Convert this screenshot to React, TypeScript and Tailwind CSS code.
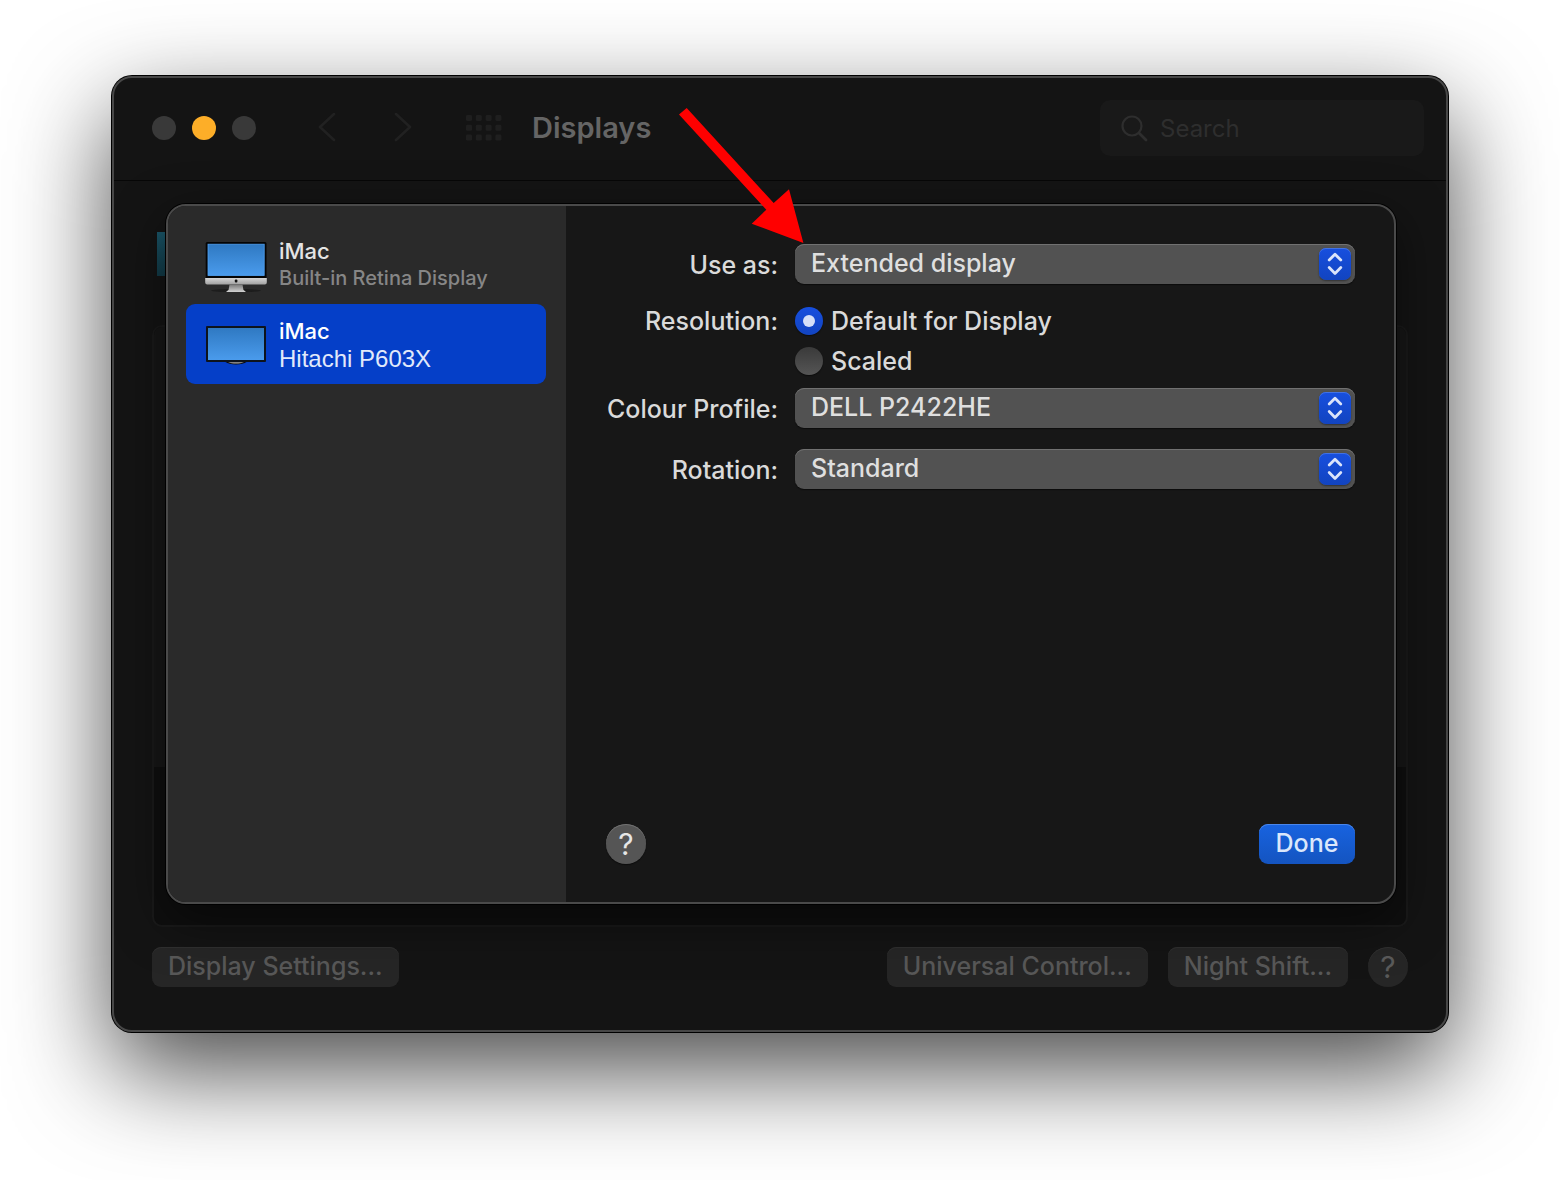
import { useState } from "react";
import type { ReactNode } from "react";

function IMacIcon() {
    return (
        <svg width="62" height="56" viewBox="0 0 62 56" aria-hidden="true">
            <defs>
                <linearGradient id="imac-screen" x1="0" y1="0" x2="0" y2="1">
                    <stop offset="0" stopColor="#2f79c2" />
                    <stop offset="1" stopColor="#4a9bec" />
                </linearGradient>
                <linearGradient id="imac-chin" x1="0" y1="0" x2="0" y2="1">
                    <stop offset="0" stopColor="#d6d6d6" />
                    <stop offset="1" stopColor="#a2a2a2" />
                </linearGradient>
                <linearGradient id="imac-stand" x1="0" y1="0" x2="0" y2="1">
                    <stop offset="0" stopColor="#777777" />
                    <stop offset="1" stopColor="#d2d2d2" />
                </linearGradient>
            </defs>
            <ellipse cx="31" cy="54.6" rx="25" ry="1.6" fill="#1d1d1d" />
            <rect x="0.7" y="6" width="60.8" height="37" rx="1.5" fill="#050505" />
            <rect x="3" y="8.2" width="56.2" height="31.4" fill="url(#imac-screen)" stroke="#4fa0f2" strokeWidth="0.8" />
            <path d="M0.2 42h61.6v4.4a2 2 0 0 1-2 2H2.2a2 2 0 0 1-2-2z" fill="url(#imac-chin)" />
            <rect x="29.800" y="43.6" width="2.6" height="2.8" rx="1" fill="#111111" />
            <path d="M24.5 48.4h13l0.900 5.400 2.600 2.200H21l2.600-2.200z" fill="url(#imac-stand)" />
        </svg>
    );
}

function MonitorIcon() {
    return (
        <svg width="62" height="56" viewBox="0 0 62 56" aria-hidden="true">
            <defs>
                <linearGradient id="monitor-screen" x1="0" y1="0" x2="0" y2="1">
                    <stop offset="0" stopColor="#2f79c2" />
                    <stop offset="1" stopColor="#4a9bec" />
                </linearGradient>
            </defs>
            <path d="M20.5 46h21c-2 1.6-6 2.4-10.500 2.400s-8.500-0.800-10.500-2.400z" fill="#0c0c0c" />
            <path d="M23 46.200h16c-2 0.900-5 1.300-8 1.300s-6-0.400-8-1.300z" fill="#a9a9a9" />
            <rect x="1" y="10" width="60" height="36" rx="1" fill="#0d131c" />
            <rect x="3" y="12" width="56" height="32" fill="url(#monitor-screen)" />
        </svg>
    );
}

function Chevron({ d }: { d: string }) {
    return (
        <svg width="18" height="30" viewBox="0 0 18 30" fill="none" stroke="#212121" strokeWidth="2.6" strokeLinecap="round" strokeLinejoin="round" aria-hidden="true">
            <path d={d} />
        </svg>
    );
}

function GridIcon() {
    return (
        <svg width="36" height="26" viewBox="0 0 36 26" fill="#1f1f1f" aria-hidden="true">
            {[0, 9.8, 19.6].map((y) =>
                [0, 9.8, 19.6, 29.4].map((x) => <rect key={`${x}-${y}`} x={x} y={y} width="6" height="6" rx="1.4" />)
            )}
        </svg>
    );
}

function PopUp({ id, value, children }: { id: string; value: string; children?: ReactNode }) {
    return (
        <div className="relative">
            <select
                id={id}
                className="block h-10 w-full appearance-none rounded-[9px] bg-[#525252] pr-12 pb-0.5 pl-4 text-[25px] leading-[38px] font-medium text-[#dfdfdf] shadow-[inset_0_1px_0_#717171,0_1px_1px_#0c0c0c]"
            >
                <option>{value}</option>
            </select>
            <span className="pointer-events-none absolute top-1 right-1 flex size-8 items-center justify-center rounded-[7px] bg-gradient-to-b from-[#174fdf] to-[#1244c0] shadow-[inset_0_1px_0_#4272e4,0_1px_2px_#00000066]">
                <svg width="16" height="24" viewBox="0 0 16 24" fill="none" stroke="#dbe4fa" strokeWidth="2.8" strokeLinecap="round" strokeLinejoin="round" aria-hidden="true">
                    <path d="M2.2 8 8 2.200 13.800 8M2.200 15.600 8 21.400 13.800 15.600" />
                </svg>
            </span>
            {children}
        </div>
    );
}

function Radio({ label, checked, onChange }: { label: string; checked: boolean; onChange: () => void }) {
    return (
        <label className="flex h-10 items-center gap-2">
            <span className="relative flex size-7">
                <input
                    type="radio"
                    name="resolution"
                    checked={checked}
                    onChange={onChange}
                    className="peer size-7 appearance-none rounded-full bg-gradient-to-b from-[#3a3a3a] to-[#555555] shadow-[0_1px_1px_#0c0c0c] checked:from-[#174fdf] checked:to-[#1244c0]"
                />
                <span className="pointer-events-none absolute inset-2 hidden rounded-full bg-[#d6e0f8] peer-checked:block" />
            </span>
            {label}
        </label>
    );
}

const displays = [
    { name: "iMac", detail: "Built-in Retina Display", icon: <IMacIcon /> },
    { name: "iMac", detail: "Hitachi P603X", icon: <MonitorIcon /> },
];

function Sidebar() {
    const [selected, setSelected] = useState(1);

    return (
        <aside className="w-[398px] shrink-0 rounded-l-[18px] bg-[#2a2a2a] pt-[18px] pr-5 pl-[18px]">
            {displays.map((display, index) => (
                <button
                    key={display.detail}
                    type="button"
                    onClick={() => setSelected(index)}
                    className={`flex h-20 w-full items-center gap-3 rounded-[9px] pl-[19px] text-left ${index === selected ? "bg-[#053fc8]" : ""}`}
                >
                    {display.icon}
                    <span className="pt-0.5 leading-[27px]">
                        <span className={`block text-[22px] font-medium ${index === selected ? "text-white" : "text-[#e4e4e4]"}`}>{display.name}</span>
                        <span
                            className={`block ${index === selected ? "font-['Liberation_Sans',sans-serif] text-2xl leading-[27px] text-[#e1e9fa]" : "text-[20px] leading-[27px] font-medium text-[#868686]"}`}
                        >
                            {display.detail}
                        </span>
                    </span>
                </button>
            ))}
        </aside>
    );
}

function SettingsSheet() {
    const [resolution, setResolution] = useState("default");

    return (
        <div
            role="dialog"
            aria-label="Display Settings"
            className="absolute top-[23px] right-[50px] left-[52px] flex min-h-[700px] rounded-[20px] border-2 border-[#4a4a4a] bg-[#171717] shadow-[0_0_0_1px_#000000,0_16px_50px_#00000080]"
        >
            <Sidebar />
            <div className="flex flex-1 flex-col justify-between py-[38px] pr-[39px] pl-10">
                <div className="grid grid-cols-[172px_1fr] gap-x-[17px] text-[25px] leading-[42px] font-medium text-[#dadada]">
                    <label htmlFor="use-as" className="text-right whitespace-nowrap">Use as:</label>
                    <PopUp id="use-as" value="Extended display">
                        <svg className="pointer-events-none absolute -top-[137px] -left-[117px]" width="126" height="137" viewBox="0 0 126 137" fill="#ff0000" aria-hidden="true">
                            <path d="M1 7.600 8.700 1 95.700 96 111 82.300 125.400 136 73.700 116.700 88.300 102.700z" />
                        </svg>
                    </PopUp>

                    <span id="resolution-label" className="mt-[15px] text-right leading-10">Resolution:</span>
                    <div role="radiogroup" aria-labelledby="resolution-label" className="mt-[15px] mb-[7px] leading-10">
                        <Radio label="Default for Display" checked={resolution === "default"} onChange={() => setResolution("default")} />
                        <Radio label="Scaled" checked={resolution === "scaled"} onChange={() => setResolution("scaled")} />
                    </div>

                    <label htmlFor="profile" className="text-right whitespace-nowrap">Colour Profile:</label>
                    <PopUp id="profile" value="DELL P2422HE" />

                    <label htmlFor="rotation" className="mt-[19px] text-right">Rotation:</label>
                    <div className="mt-[19px]">
                        <PopUp id="rotation" value="Standard" />
                    </div>
                </div>

                <div className="flex items-center justify-between">
                    <button type="button" className="size-10 rounded-full bg-[#555555] text-[30px] leading-10 text-[#e6e6e6] shadow-[inset_0_1px_0_#717171,0_1px_1px_#0c0c0c]">?</button>
                    <button type="button" className="h-10 w-24 rounded-[9px] bg-gradient-to-b from-[#1863e0] to-[#1454c0] pb-0.5 text-[25px] leading-[38px] font-medium text-[#dbe7fb] shadow-[inset_0_1px_0_#4a86ea]">
                        Done
                    </button>
                </div>
            </div>
        </div>
    );
}

function TitleBar() {
    return (
        <header className="flex h-[103px] items-center border-b border-[#070707] pr-[22px] pb-0.5 pl-[38px]">
            <div className="flex gap-4">
                <button type="button" aria-label="Close" className="size-6 rounded-full bg-[#393939]" />
                <button type="button" aria-label="Minimise" className="size-6 rounded-full bg-[#fdae28]" />
                <button type="button" aria-label="Zoom" className="size-6 rounded-full bg-[#393939]" />
            </div>
            <div className="ml-[62px] flex gap-[58px]">
                <button type="button" aria-label="Back"><Chevron d="M16 1 2 14 16 27" /></button>
                <button type="button" aria-label="Forward"><Chevron d="M2 1 16 14 2 27" /></button>
            </div>
            <button type="button" aria-label="Show all" className="ml-[54px]"><GridIcon /></button>
            <h1 className="ml-[30px] text-[29px] font-semibold text-[#656565]">Displays</h1>
            <label className="ml-auto flex h-14 w-[324px] items-center gap-3 rounded-[10px] bg-[#191919] pl-5">
                <svg className="shrink-0" width="28" height="28" viewBox="0 0 28 28" fill="none" stroke="#2e2e2e" strokeWidth="2.200" strokeLinecap="round" aria-hidden="true">
                    <circle cx="12" cy="12" r="9.500" />
                    <path d="m19 19 7 7" strokeWidth="2.800" />
                </svg>
                <input type="search" placeholder="Search" aria-label="Search" className="w-full bg-transparent pt-0.5 text-2xl text-[#656565] outline-none placeholder:text-[#2e2e2e]" />
            </label>
        </header>
    );
}

export default function App() {
    const footerButton = "h-10 rounded-[9px] bg-[#262626] px-4 pb-0.5 text-[25px] leading-[38px] font-medium text-[#585858] shadow-[inset_0_1px_0_#303030]";

    return (
        <div className="min-h-screen bg-white px-28 pt-19 pb-37 font-['Inter',sans-serif]">
            <main className="rounded-[20px] border-2 border-[#474747] bg-[#141414] shadow-[0_0_0_1px_#000000,0_38px_100px_#000000b8]">
                <TitleBar />
                <div className="relative px-[38px] pt-[51px] pb-[43px]">
                    {/* arrangement preview, mostly hidden behind the sheet */}
                    <div className="ml-[5px] h-11 w-20 bg-gradient-to-b from-[#1a5669] to-[#123c49]" />
                    <div className="mt-[49px] h-[602px] overflow-hidden rounded-[10px] border-2 border-[#1a1a1a] bg-[#0f0f0f]">
                        <div className="h-[440px] bg-[#171717]" />
                    </div>
                    <footer className="mt-5 flex items-center">
                        <button type="button" className={footerButton}>Display Settings...</button>
                        <button type="button" className={`ml-auto ${footerButton}`}>Universal Control...</button>
                        <button type="button" className={`ml-5 ${footerButton}`}>Night Shift...</button>
                        <button type="button" className="ml-5 size-10 rounded-full bg-[#262626] text-[30px] leading-10 text-[#5a5a5a] shadow-[inset_0_1px_0_#303030]">?</button>
                    </footer>
                    <SettingsSheet />
                </div>
            </main>
        </div>
    );
}
